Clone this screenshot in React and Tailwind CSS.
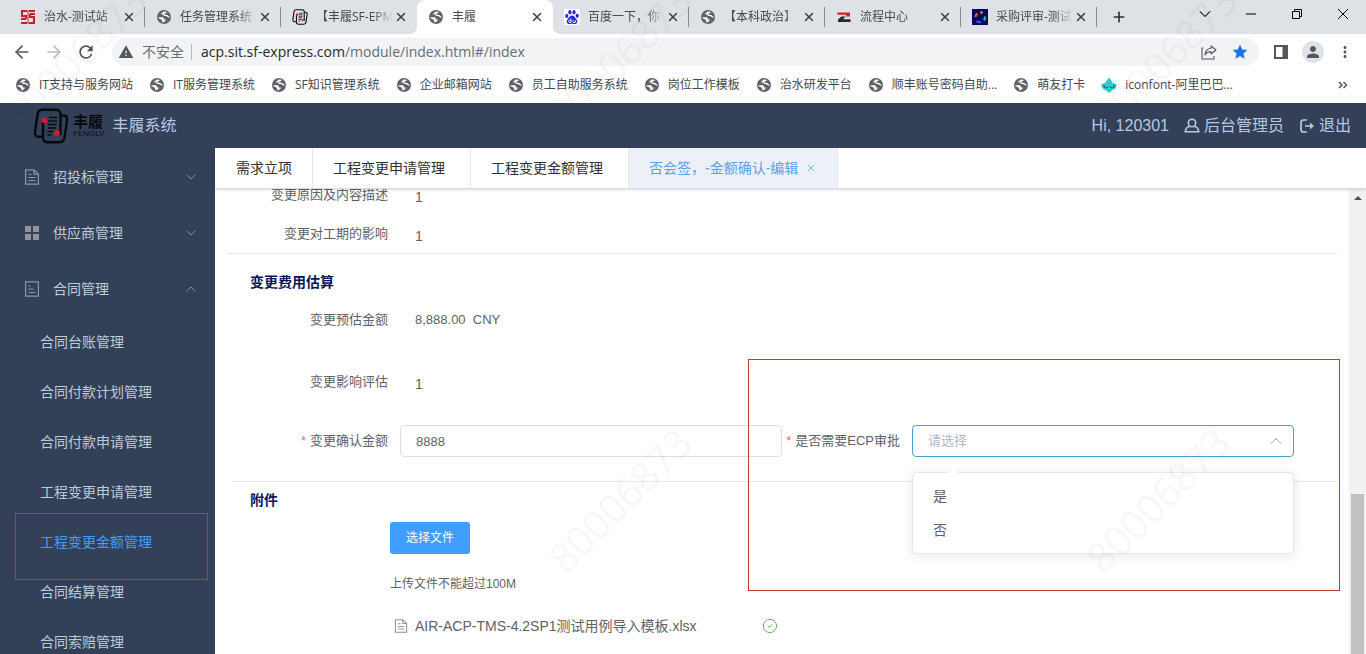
import React, { useState } from 'react';
import { ArrowLeft, ArrowRight, ChevronDown, ChevronUp, X, Plus, Minus, CircleCheck } from 'lucide-react';
import { MdRefresh, MdWarning, MdStar, MdPerson, MdMoreVert } from 'react-icons/md';

const browserTabs = [
  { icon: 'sf', title: '治水-测试站' },
  { icon: 'globe', title: '任务管理系统' },
  { icon: 'fenglv', title: '【丰履SF-EPM' },
  { icon: 'globe', title: '丰履', active: true },
  { icon: 'baidu', title: '百度一下，你' },
  { icon: 'globe', title: '【本科政治】' },
  { icon: 'flow', title: '流程中心' },
  { icon: 'review', title: '采购评审-测试' },
];

const bookmarks = [
  'IT支持与服务网站',
  'IT服务管理系统',
  'SF知识管理系统',
  '企业邮箱网站',
  '员工自助服务系统',
  '岗位工作模板',
  '治水研发平台',
  '顺丰账号密码自助...',
  '萌友打卡',
];

const contractMenu = [
  '合同台账管理',
  '合同付款计划管理',
  '合同付款申请管理',
  '工程变更申请管理',
  '工程变更金额管理',
  '合同结算管理',
  '合同索赔管理',
];

function GlobeIcon() {
  return (
    <svg viewBox="0 0 16 16" className="h-4 w-4 shrink-0">
      <circle cx="8" cy="8" r="7" fill="#5f6368" />
      <path d="M2.200 8.200h4c1 0 1.500.5 1.500 1.300 0 .6.3.9.9.9h1.200v1.200c-.9.100-1.400.6-1.600 1.500l-1.700.3C6.400 12 6 10.200 4.500 9.900 3.500 9.700 2.600 9.300 2.200 8.200z" fill="#fff" />
      <path d="M8.600 2.500l2.200.5c-.3 1-.9 1.200-1.900 1.300-.5.9-.3 1.500-1.300 1.700l.2.9h1.800c.9 0 1.300.4 1.500 1.200.8 0 1.600.1 2.300.9l.1-1.400-1.200-.5c-.5-.9-.9-1.200-1.900-1.100l-.9-.4H6.300c-.8 0-1.300-.3-1.300-1 1-.2 1.300-.6 1.500-1.200.4-.6 1.100-.8 2.100-.9z" fill="#fff" />
    </svg>
  );
}

function FenglvMark({ className }) {
  return (
    <svg viewBox="0 0 36 36" className={className} fill="none">
      <path
        d="M27.500 27V6.500c0-3-1.500-4.700-4.500-4.700H9.500C6.500 1.800 5 3.300 4.600 6L2 24c-.4 3 1 4.700 4 4.700h4"
        stroke="#07090d"
        strokeWidth="2.400"
      />
      <path
        d="M28 7.500h2c3 0 4.500 1.500 4.100 4.300l-2.600 17.900c-.4 3-2 4.500-5 4.500H14.500c-3 0-4.500-1.500-4.500-4.500V14"
        stroke="#07090d"
        strokeWidth="2.400"
      />
      <path d="M16 9.500h8M15.500 13h8.500M15 16.500h8.500M15 20h8M14.500 23.500h6M14.500 27h4" stroke="#07090d" strokeWidth="1.700" />
      <circle cx="11.500" cy="12.500" r="2.700" fill="#e0182f" />
      <circle cx="24" cy="25" r="2.700" fill="#e0182f" />
    </svg>
  );
}

function Favicon({ name }) {
  if (name === 'sf') {
    return (
      <svg viewBox="0 0 16 16" className="h-4 w-4 shrink-0" fill="none" stroke="#c3202f" strokeWidth="2">
        <path d="M7 2H2v5h4v3M1 10h5M1 14h6M9 14h5V8h-4V5M9 2h6M10 5h5" />
        <path d="M8 1v14" strokeWidth="1" />
      </svg>
    );
  }
  if (name === 'fenglv') return <FenglvMark className="h-4 w-4 shrink-0" />;
  if (name === 'baidu') {
    return (
      <svg viewBox="0 0 16 16" className="h-4 w-4 shrink-0">
        <rect width="16" height="16" fill="#fff" />
        <g fill="#2529d8">
          <ellipse cx="2.800" cy="7" rx="1.600" ry="2.100" />
          <ellipse cx="5.900" cy="3.300" rx="1.600" ry="2.200" />
          <ellipse cx="10" cy="3.300" rx="1.600" ry="2.200" />
          <ellipse cx="13.200" cy="6.800" rx="1.600" ry="2.100" />
          <path d="M8 6.600c2 0 2.500 1.800 4 3.100 1.900 1.700 1.700 5.300-1.300 5.400-1.200 0-1.700-.3-2.700-.3s-1.500.3-2.700.3c-3-.1-3.200-3.700-1.300-5.400C5.500 8.400 6 6.600 8 6.600z" />
        </g>
        <path d="M7 9.500v4H5.500c-1.200 0-1.200-2.300 0-2.300H7M9 11.200v1.500c0 .6.300.8.800.8h1.500v-2.300" stroke="#fff" strokeWidth=".9" fill="none" />
      </svg>
    );
  }
  if (name === 'flow') {
    return (
      <svg viewBox="0 0 16 16" className="h-4 w-4 shrink-0">
        <path d="M1.500 3.500h12.500v4H9.500l1-1.700h-9z" fill="#d81e2c" />
        <path d="M9.500 7.500H5.500L2 10.500V13h12.500v-2.700H7z" fill="#26282c" />
      </svg>
    );
  }
  if (name === 'review') {
    return (
      <svg viewBox="0 0 16 16" className="h-4 w-4 shrink-0" fill="none" strokeWidth="2.200">
        <rect width="16" height="16" fill="#0a0a5c" />
        <path d="M5.500 4.500A5 5 0 0 0 3.500 8" stroke="#f0592a" />
        <path d="M4.500 12a5 5 0 0 0 4.500 1" stroke="#2f5df0" />
        <path d="M12 11.500a4.500 4.500 0 0 0 .8-4" stroke="#19b9c4" />
        <circle cx="9.500" cy="3.500" r="1.300" fill="#f39a2b" />
      </svg>
    );
  }
  return <GlobeIcon />;
}

function BrowserTab({ tab, divider }) {
  return (
    <div
      className={
        tab.active
          ? 'relative flex w-[136px] items-center rounded-t-lg bg-white pl-[11px] pr-2 before:absolute before:-left-2 before:bottom-0 before:h-2 before:w-2 before:bg-[radial-gradient(circle_at_0_0,transparent_8px,white_8px)] after:absolute after:-right-2 after:bottom-0 after:h-2 after:w-2 after:bg-[radial-gradient(circle_at_100%_0,transparent_8px,white_8px)]'
          : 'relative flex w-[136px] items-center pl-[11px] pr-2'
      }
    >
      <Favicon name={tab.icon} />
      <span className="ml-2 flex-1 overflow-hidden whitespace-nowrap text-xs text-[#45484d] [mask-image:linear-gradient(to_right,black_75%,transparent)]">
        {tab.title}
      </span>
      <button type="button" aria-label="关闭标签页" className="flex h-4 w-4 items-center justify-center text-[#3c4043]">
        <X className="h-3.5 w-3.5" strokeWidth={2.5} />
      </button>
      {divider && <span className="absolute right-0 h-5 w-px bg-[#85898f]" />}
    </div>
  );
}

function BrowserChrome() {
  return (
    <div className="shrink-0 bg-white font-['Open_Sans','Noto_Sans_CJK_SC',sans-serif]">
      <div className="flex h-[34px] bg-[#dee1e6] pl-[9px]">
        {browserTabs.map((tab, i) => (
          <BrowserTab key={i} tab={tab} divider={i !== 2 && i !== 3} />
        ))}
        <button type="button" aria-label="新标签页" className="flex w-11 items-center justify-center text-[#303236]">
          <Plus className="h-4 w-4" strokeWidth={2.5} />
        </button>
        <div className="ml-auto flex pb-1.5 text-black">
          <button type="button" aria-label="搜索标签页" className="flex w-[46px] items-center justify-center">
            <ChevronDown className="h-5 w-5" strokeWidth={1.25} />
          </button>
          <button type="button" aria-label="最小化" className="flex w-[46px] items-center justify-center">
            <Minus className="h-4 w-4" strokeWidth={1.5} />
          </button>
          <button type="button" aria-label="还原" className="flex w-[46px] items-center justify-center">
            <svg viewBox="0 0 10 10" className="h-2.5 w-2.5" fill="none" stroke="currentColor">
              <path d="M.5 2.500h7v7h-7zM2.500 2.500v-2h7v7h-2" />
            </svg>
          </button>
          <button type="button" aria-label="关闭" className="flex w-[46px] items-center justify-center">
            <svg viewBox="0 0 10 10" className="h-2.5 w-2.5" stroke="currentColor">
              <path d="M0 0l10 10M10 0L0 10" />
            </svg>
          </button>
        </div>
      </div>

      <div className="flex h-9 items-center pl-3 pr-3 text-[#54575c]">
        <button type="button" aria-label="后退" className="flex w-5 justify-center">
          <ArrowLeft className="h-5 w-5" />
        </button>
        <button type="button" aria-label="前进" className="ml-3 flex w-5 justify-center text-[#b9bbbe]">
          <ArrowRight className="h-5 w-5" />
        </button>
        <button type="button" aria-label="重新加载" className="ml-3 flex w-5 justify-center">
          <MdRefresh className="h-5 w-5" />
        </button>
        <div className="ml-4 flex h-7 flex-1 items-center rounded-full bg-[#f1f3f4] pl-1.5 pr-2.5 text-sm">
          <MdWarning className="h-4 w-4" />
          <span className="ml-2 text-[#6a6d72]">不安全</span>
          <span className="ml-[7px] h-4 w-px bg-[#b5b8bc]" />
          <span className="ml-[9px] whitespace-nowrap text-[#6a6d72]">
            <span className="text-[#27292c]">acp.sit.sf-express.com</span>/module/index.html#/index
          </span>
          <button type="button" aria-label="分享" className="ml-auto">
            <svg viewBox="0 0 16 16" className="h-4 w-4" fill="none" stroke="currentColor" strokeWidth="1.100">
              <path d="M2.500 4H1v11h12v-3" />
              <path d="M10 2l5 4-5 4V7.600c-3 0-4.800 1-6 3.400.3-4 2.500-6.400 6-6.700z" strokeLinejoin="round" />
            </svg>
          </button>
          <button type="button" aria-label="收藏" className="ml-3.5 text-[#1a73e8]">
            <MdStar className="h-[18px] w-[18px]" />
          </button>
        </div>
        <button type="button" aria-label="侧边栏" className="ml-[15px]">
          <svg viewBox="0 0 14 14" className="h-3.5 w-3.5">
            <path d="M1 1h12v12H1z" fill="none" stroke="currentColor" strokeWidth="2" />
            <path d="M8.500 1H13v12H8.500z" fill="currentColor" />
          </svg>
        </button>
        <button type="button" aria-label="用户" className="ml-3.5 flex h-[22px] w-[22px] items-center justify-center rounded-full bg-[#dfe2e6]">
          <MdPerson className="h-[18px] w-[18px]" />
        </button>
        <button type="button" aria-label="更多" className="ml-3">
          <MdMoreVert className="h-[18px] w-[18px]" />
        </button>
      </div>

      <div className="flex h-[33px] items-center gap-4 pb-1 pl-[15px] pr-[18px] text-xs text-[#45484d]">
        {bookmarks.map((name) => (
          <a key={name} href="#" className="flex items-center gap-2 whitespace-nowrap">
            <GlobeIcon />
            {name}
          </a>
        ))}
        <a href="#" className="flex items-center gap-2 whitespace-nowrap">
          <svg viewBox="0 0 16 16" className="h-4 w-4">
            <path d="M8 0c.8 2.500 3 3.500 3.500 5.800l4 1.500c.3 3-1.200 5.400-3.800 5.700L8 15.800 4.300 13C1.700 12.700.2 10.300.5 7.300l4-1.500C5 3.500 7.200 2.500 8 0z" fill="#22cfd2" />
            <path d="M2 8.200l5 1.600c0 1.900-4 2.100-5-1.600zM14 8.200L9 9.800c0 1.900 4 2.100 5-1.600z" fill="#17464d" />
            <circle cx="4.900" cy="9.800" r=".7" fill="#fff" />
            <circle cx="11.100" cy="9.800" r=".7" fill="#fff" />
          </svg>
          iconfont-阿里巴巴...
        </a>
        <button type="button" aria-label="更多书签" className="ml-auto text-[#54575c]">
          <svg viewBox="0 0 10 10" className="h-2.5 w-2.5" fill="none" stroke="currentColor" strokeWidth="1.500">
            <path d="M1 2l3 3-3 3M5.500 2l3 3-3 3" />
          </svg>
        </button>
      </div>
    </div>
  );
}

function AppHeader() {
  return (
    <header className="flex h-[45px] shrink-0 items-center bg-[#344058] pl-[33px] pr-[15px] text-base text-[#b9c8e0]">
      <FenglvMark className="h-9 w-9" />
      <div className="ml-1 text-[#07090d]">
        <div className="text-[15px] leading-4 font-bold">丰履</div>
        <div className="text-[8px] leading-2">FENGLV</div>
      </div>
      <h1 className="ml-2">丰履系统</h1>
      <div className="ml-auto flex items-center gap-[15px]">
        <span>Hi, 120301</span>
        <a href="#" className="flex items-center gap-1">
          <svg viewBox="0 0 16 16" className="h-4 w-4" fill="none" stroke="currentColor" strokeWidth="1.600">
            <circle cx="8" cy="5" r="3.700" />
            <path d="M5.500 8.200C3 9 1.500 11 1.200 13.800h13.600c-.3-2.800-1.800-4.800-4.300-5.600" />
          </svg>
          后台管理员
        </a>
        <a href="#" className="flex items-center gap-1">
          <svg viewBox="0 0 16 16" className="h-4 w-4" fill="none" stroke="currentColor" strokeWidth="1.700">
            <path d="M8 2H4.500Q2 2 2 4.500v7Q2 14 4.500 14H8M6 8h7" />
            <path d="M11 4.500l4 3.500-4 3.500z" fill="currentColor" stroke="none" />
          </svg>
          退出
        </a>
      </div>
    </header>
  );
}

function DocIcon({ className }) {
  return (
    <svg viewBox="0 0 16 16" className={className} fill="none" stroke="currentColor" strokeWidth="1.200">
      <path d="M1.600 .8h8.400l4.400 4.400v10H1.600zM10 .8v4.400h4.400M4.500 5.500h3M4.500 8.500h7M4.500 11.500h7" />
    </svg>
  );
}

function Sidebar() {
  return (
    <nav className="w-[215px] shrink-0 overflow-hidden bg-[#324157] pt-px text-sm text-[#bfcbd9]">
      <a href="#" className="flex h-14 items-center pl-6 pr-4">
        <DocIcon className="h-4 w-4 text-[#909399]" />
        <span className="ml-[13px]">招投标管理</span>
        <ChevronDown className="ml-auto h-4 w-4 text-[#8590a0]" strokeWidth={1.5} />
      </a>
      <a href="#" className="flex h-14 items-center pl-6 pr-4">
        <svg viewBox="0 0 16 16" className="h-4 w-4 text-[#909399]" fill="currentColor">
          <path d="M1 1h6v6H1zM9 1h6v6H9zM1 9h6v6H1zM9 9h6v6H9z" />
        </svg>
        <span className="ml-[13px]">供应商管理</span>
        <ChevronDown className="ml-auto h-4 w-4 text-[#8590a0]" strokeWidth={1.5} />
      </a>
      <a href="#" className="flex h-14 items-center pl-6 pr-4">
        <svg viewBox="0 0 16 16" className="h-4 w-4 text-[#909399]" fill="none" stroke="currentColor" strokeWidth="1.200">
          <path d="M1.600 .8h12.800v14.400H1.600zM4.500 5h2M4.500 8h5M4.500 11.500h7" />
        </svg>
        <span className="ml-[13px]">合同管理</span>
        <ChevronUp className="ml-auto h-4 w-4 text-[#8590a0]" strokeWidth={1.5} />
      </a>
      <ul>
        {contractMenu.map((name) => {
          const active = name === '工程变更金额管理';
          return (
            <li key={name} className="relative">
              <a href="#" className={active ? 'flex h-[50px] items-center pl-10 text-[#409eff]' : 'flex h-[50px] items-center pl-10'}>
                {name}
              </a>
              {active && (
                <div className="pointer-events-none absolute -top-1 right-[7px] left-[15px] z-10 h-[67px] border border-[#c4392b]" />
              )}
            </li>
          );
        })}
      </ul>
    </nav>
  );
}

function PageTabs() {
  return (
    <div className="relative z-10 flex h-[41px] shrink-0 border-b border-[#d8dce5] bg-white text-sm text-[#303133] shadow-sm">
      <button type="button" className="border-r border-[#e4e7ed] px-5 pl-[21px]">需求立项</button>
      <button type="button" className="border-r border-[#e4e7ed] pl-5 pr-[25px]">工程变更申请管理</button>
      <button type="button" className="border-r border-[#e4e7ed] pl-5 pr-[25px]">工程变更金额管理</button>
      <button type="button" className="flex items-center border-r border-[#e4e7ed] bg-[#edf0f7] pl-5 pr-5 text-[#5b9fec]">
        否会签，-金额确认-编辑
        <X className="ml-[7px] h-3 w-3" strokeWidth={1.5} />
      </button>
    </div>
  );
}

function Field({ label, children, className }) {
  return (
    <div className={`flex items-center text-[13px] text-[#606266] ${className}`}>
      <div className="w-[130px] shrink-0 whitespace-nowrap pr-3 text-right">{label}</div>
      {children}
    </div>
  );
}

function ChangeForm() {
  const [amount, setAmount] = useState('8888');
  const [needEcp, setNeedEcp] = useState('');

  return (
    <form className="relative -mt-3.5 min-w-0 flex-1">
      <div className="px-[55px]">
        <Field label="变更原因及内容描述" className="h-10">
          <span className="pl-[15px] pt-1 text-sm">1</span>
        </Field>
        <Field label="变更对工期的影响" className="h-[38px]">
          <span className="pl-[15px] pt-1 text-sm">1</span>
        </Field>
      </div>

      <hr className="mx-3 border-[#e6e8ec]" />
      <h2 className="flex h-14 items-center pl-[35px] text-sm font-bold text-[#0b1458]">变更费用估算</h2>
      <div className="px-[55px]">
        <Field label="变更预估金额" className="h-5">
          <span className="whitespace-pre pl-[15px]">{'8,888.00  CNY'}</span>
        </Field>
        <Field label="变更影响评估" className="mt-8 h-10">
          <span className="pl-[15px] pt-1 text-sm">1</span>
        </Field>
        <div className="mt-[23px] grid grid-cols-2 text-[13px] text-[#606266]">
          <div className="flex items-center">
            <label htmlFor="amount" className="w-[130px] shrink-0 whitespace-nowrap pr-3 text-right">
              <span className="mr-1 text-[#f56c6c]">*</span>变更确认金额
            </label>
            <input
              id="amount"
              type="text"
              value={amount}
              onChange={(e) => setAmount(e.target.value)}
              className="h-8 w-full min-w-0 rounded border border-[#dcdfe6] bg-white px-[15px] outline-none"
            />
          </div>
          <div className="flex items-center">
            <label htmlFor="ecp" className="w-[130px] shrink-0 whitespace-nowrap pr-3 text-right">
              <span className="mr-1 text-[#f56c6c]">*</span>是否需要ECP审批
            </label>
            <div className="relative flex-1">
              <select
                id="ecp"
                value={needEcp}
                onChange={(e) => setNeedEcp(e.target.value)}
                className="block h-8 w-full appearance-none rounded border border-[#4d9fce] bg-white px-[15px] text-[#b4b8c0] outline-none"
              >
                <option value="">请选择</option>
                <option value="1">是</option>
                <option value="0">否</option>
              </select>
              <ChevronUp className="pointer-events-none absolute right-2 top-1.5 h-5 w-5 text-[#b4b8c0]" strokeWidth={1.25} />
              <ul className="absolute inset-x-0 top-full z-10 mt-[15px] rounded border border-[#e4e7ed] bg-white py-1.5 text-sm shadow-[0_2px_12px_rgba(0,0,0,0.1)]">
                <li className="flex h-[34px] items-center px-5">是</li>
                <li className="flex h-[34px] items-center px-5">否</li>
                <li aria-hidden="true" className="absolute -top-1 left-9 h-2 w-2 rotate-45 bg-white" />
              </ul>
            </div>
          </div>
        </div>
      </div>

      <hr className="ml-[17px] mr-3 mt-6 border-[#e6e8ec]" />
      <h2 className="flex h-9 items-center pl-[35px] text-sm font-bold text-[#0b1458]">附件</h2>
      <div className="pl-[175px] text-xs text-[#606266]">
        <button type="button" className="mt-1 h-8 w-20 rounded-[3px] bg-[#409eff] text-white">选择文件</button>
        <p className="mt-5 leading-5">上传文件不能超过100M</p>
        <div className="mt-[22px] flex w-[392px] items-center pl-1 pr-1 text-sm">
          <DocIcon className="h-3.5 w-3.5 text-[#909399]" />
          <a href="#" className="ml-[7px] whitespace-nowrap">AIR-ACP-TMS-4.2SP1测试用例导入模板.xlsx</a>
          <CircleCheck className="ml-auto h-4 w-4 text-[#67b85a]" strokeWidth={1.5} />
        </div>
      </div>

      {/* callout round the approval field */}
      <div className="pointer-events-none absolute right-[9px] top-[184px] h-[232px] w-[592px] border border-[#c4392b]" />
    </form>
  );
}

function ScrollBar() {
  return (
    <div className="flex w-[17px] shrink-0 flex-col bg-[#f1f1f1] px-0.5">
      <div className="flex h-[17px] items-center justify-center">
        <svg viewBox="0 0 8 4" className="h-1 w-2">
          <path d="M4 0l4 4H0z" fill="#505050" />
        </svg>
      </div>
      <div className="flex-[9]" />
      <div className="flex-[5] bg-[#c1c1c1]" />
    </div>
  );
}

// staff number stamped over the whole window
function Watermark() {
  const spots = [
    'left-[-25px] top-[30px]',
    'left-[520px] top-[30px]',
    'left-[1065px] top-[30px]',
    'left-[520px] top-[472px]',
    'left-[1058px] top-[472px]',
  ];
  return (
    <div aria-hidden="true" className="pointer-events-none absolute inset-0 z-20 overflow-hidden">
      {spots.map((spot) => (
        <span
          key={spot}
          className={`absolute w-[200px] -rotate-45 text-center font-['Open_Sans',sans-serif] text-[40px] leading-14 text-black/5 ${spot}`}
        >
          80006873
        </span>
      ))}
    </div>
  );
}

function App() {
  return (
    <div className="relative flex h-screen flex-col overflow-hidden bg-white font-['Liberation_Sans','Noto_Sans_CJK_SC',sans-serif]">
      <BrowserChrome />
      <AppHeader />
      <div className="flex min-h-0 flex-1">
        <Sidebar />
        <main className="flex min-w-0 flex-1 flex-col">
          <PageTabs />
          <div className="flex min-h-0 flex-1 overflow-hidden">
            <ChangeForm />
            <ScrollBar />
          </div>
        </main>
      </div>
      <Watermark />
    </div>
  );
}

export default App;
